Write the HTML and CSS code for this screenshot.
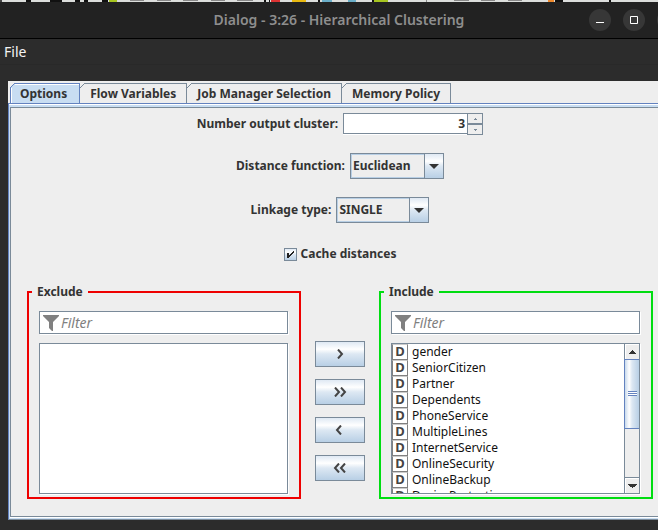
FILE: index.html
```html
<!DOCTYPE html>
<html lang="en">
<head>
<meta charset="utf-8">
<title>Dialog - 3:26 - Hierarchical Clustering</title>
<link rel="stylesheet" href="styles.css">
</head>
<body>
<div class="window">
  <svg class="backdrop" viewBox="0 0 678 2" preserveAspectRatio="none" aria-hidden="true">
    <path fill="#dcdedc" d="M2 0h676v2H2z"/>
    <path fill="#111" d="M26 0h5v2h-5zM50 0h12v2H50zM75 0h5v2h-5zM84 0h4v2h-4zM102 0h6v2h-6zM264 0h2v2h-2zM269 0h1v2h-1zM318 0h2v2h-2zM372 0h2v2h-2zM555 0h8v2h-8zM609 0h2v2h-2z"/>
    <path fill="#888" d="M130 0h14v1h-14zM157 0h14v1h-14zM183 0h15v1h-15zM211 0h14v1h-14zM237 0h16v1h-16zM426 0h1v2h-1zM454 0h15v1h-15zM481 0h14v1h-14zM508 0h14v1h-14z"/>
    <path fill="#a7c520" d="M109 0h8v2h-8zM374 0h14v2h-14z"/>
    <path fill="#d33" d="M271 0h9v2h-9z"/>
    <path fill="#e9b910" d="M292 0h14v2h-14z"/>
    <path fill="#6aaec8" d="M322 0h10v2h-10zM348 0h8v2h-8z"/>
    <path fill="#f08a2c" d="M548 0h6v2h-6z"/>
  </svg>
  <header class="titlebar">
    <h1 class="title">Dialog - 3:26 - Hierarchical Clustering</h1>
    <div class="window-buttons">
      <button class="round" type="button" aria-label="Minimize"><svg width="22" height="22" viewBox="0 0 22 22"><path d="M7 13.500h8" stroke="#fff" fill="none"/></svg></button>
      <button class="round" type="button" aria-label="Maximize"><svg width="22" height="22" viewBox="0 0 22 22"><path d="M7.500 7.500h7v7h-7z" stroke="#fff" fill="none"/></svg></button>
      <button class="round" type="button" aria-label="Close"><svg width="22" height="22" viewBox="0 0 22 22"><path d="M7 7l8 8M15 7l-8 8" stroke="#fff" fill="none"/></svg></button>
    </div>
  </header>
  <nav class="menubar"><button class="menu" type="button">File</button></nav>

  <main class="dialog">
    <div class="tabs" role="tablist">
      <button class="tab selected" type="button" role="tab" aria-selected="true">Options</button>
      <button class="tab" type="button" role="tab" aria-selected="false">Flow Variables</button>
      <button class="tab" type="button" role="tab" aria-selected="false">Job Manager Selection</button>
      <button class="tab" type="button" role="tab" aria-selected="false">Memory Policy</button>
    </div>
    <div class="pane">
      <form class="options">
        <div class="row row-spinner">
          <label for="clusters">Number output cluster:</label>
          <div class="spinner">
            <input id="clusters" type="text" inputmode="numeric" value="3">
            <div class="steps">
              <button type="button" aria-label="Increase"><svg width="3" height="2" viewBox="0 0 3 2"><path d="M1 0h1v1h1v1H0V1h1z"/></svg></button>
              <button type="button" aria-label="Decrease"><svg width="3" height="2" viewBox="0 0 3 2"><path d="M0 0h3v1H2v1H1V1H0z"/></svg></button>
            </div>
          </div>
        </div>
        <div class="row">
          <label for="distance">Distance function:</label>
          <div class="combo">
            <select id="distance"><option>Euclidean</option></select>
            <span class="combo-arrow"><svg width="10" height="5" viewBox="0 0 10 5"><path d="M0 0h10L5 5z"/></svg></span>
          </div>
        </div>
        <div class="row">
          <label for="linkage">Linkage type:</label>
          <div class="combo">
            <select id="linkage"><option>SINGLE</option></select>
            <span class="combo-arrow"><svg width="10" height="5" viewBox="0 0 10 5"><path d="M0 0h10L5 5z"/></svg></span>
          </div>
        </div>
        <div class="row row-check">
          <label class="check">
            <span class="check-box">
              <input type="checkbox" checked>
              <svg width="13" height="13" viewBox="0 0 13 13" aria-hidden="true"><path d="M3 5h2v2h1V6h1V5h1V4h1V3h1v2H9v1H8v1H7v1H6v1H5v1H3z"/></svg>
            </span>
            Cache distances
          </label>
        </div>

        <div class="columns">
          <fieldset class="group exclude">
            <legend>Exclude</legend>
            <div class="filter">
              <svg width="16" height="16" viewBox="0 0 16 16" aria-hidden="true"><path d="M0 0h16v1l-6 6v9H9l-3-3V7L0 1z"/></svg>
              <input type="text" placeholder="Filter" aria-label="Filter excluded columns">
            </div>
            <div class="list"><ul aria-label="Excluded columns"></ul></div>
          </fieldset>
          <div class="movers">
            <button type="button" aria-label="Include selected"><svg width="14" height="10" viewBox="0 0 14 10"><path d="M5 .5L9 5 5 9.500"/></svg></button>
            <button type="button" aria-label="Include all"><svg width="14" height="10" viewBox="0 0 14 10"><path d="M2 .5L6 5 2 9.500M8 .5L12 5 8 9.500"/></svg></button>
            <button type="button" aria-label="Exclude selected"><svg width="14" height="10" viewBox="0 0 14 10"><path d="M8 .5L4 5l4 4.500"/></svg></button>
            <button type="button" aria-label="Exclude all"><svg width="14" height="10" viewBox="0 0 14 10"><path d="M6 .5L2 5l4 4.500M12 .5L8 5l4 4.500"/></svg></button>
          </div>
          <fieldset class="group include">
            <legend>Include</legend>
            <div class="filter">
              <svg width="16" height="16" viewBox="0 0 16 16" aria-hidden="true"><path d="M0 0h16v1l-6 6v9H9l-3-3V7L0 1z"/></svg>
              <input type="text" placeholder="Filter" aria-label="Filter included columns">
            </div>
            <div class="list">
              <ul aria-label="Included columns">
                <li><span class="type">D</span>gender</li>
                <li><span class="type">D</span>SeniorCitizen</li>
                <li><span class="type">D</span>Partner</li>
                <li><span class="type">D</span>Dependents</li>
                <li><span class="type">D</span>PhoneService</li>
                <li><span class="type">D</span>MultipleLines</li>
                <li><span class="type">D</span>InternetService</li>
                <li><span class="type">D</span>OnlineSecurity</li>
                <li><span class="type">D</span>OnlineBackup</li>
                <li><span class="type">D</span>DeviceProtection</li>
              </ul>
              <div class="scrollbar">
                <button class="scroll-step" type="button" aria-label="Scroll up"><svg width="7" height="4" viewBox="0 0 7 4"><path d="M3 0h1v1h1v1h1v1h1v1H0V3h1V2h1V1h1z"/></svg></button>
                <div class="track"><div class="thumb"><span class="grip"></span></div></div>
                <button class="scroll-step down" type="button" aria-label="Scroll down"><svg width="9" height="4" viewBox="0 0 9 4"><path d="M0 0h9v1H8v1H7v1H5v1H4V3H2V2H1V1H0z"/></svg></button>
              </div>
            </div>
          </fieldset>
        </div>
      </form>
    </div>
  </main>
</div>
</body>
</html>
```

FILE: styles.css
```css
:root {
  --dark: #2c2c2c;
  --panel: #eeeeee;
  --line: #7a8a99;
  --blue: #6382bf;
  --pale: #c8ddf2;
  --text: #333333;
  --metal: linear-gradient(#dfe9f4, #ffffff 30%, #dde8f3 50%, #b8cfe5);
}

* { box-sizing: border-box; }

body {
  margin: 0;
  overflow: hidden;
  min-height: 100vh;
  background: var(--dark);
  color: var(--text);
  font: bold 12px/16px "Noto Sans", sans-serif;
}

button, input, select { font: inherit; color: inherit; margin: 0; border-radius: 0; }
button { padding: 0; border: 0; background: none; }
svg { display: block; }

/* The dialog runs slightly past the right edge of the viewport. */
.window { width: calc(100% + 20px); }

.backdrop { width: 100%; height: 2px; background: #444; }

.titlebar {
  display: grid;
  grid-template-columns: 1fr auto 1fr;
  align-items: center;
  height: 37px;
  background: #222222;
  border-bottom: 1px solid #000;
}
.title {
  grid-column: 2;
  margin: 0;
  font-size: 14px;
  font-weight: 600;
  line-height: 20px;
  color: #8e8e8e;
}
.window-buttons { display: flex; justify-content: flex-end; gap: 12px; margin-right: -1px; }
.round { width: 22px; height: 22px; border-radius: 50%; background: #373737; }

.menubar { height: 26px; padding: 3px 4px; border-bottom: 1px solid #292929; }
.menu { font-size: 14px; font-weight: 400; line-height: 20px; color: #f4f4f4; display: block; }

.dialog { margin: 16px 6px 0 8px; background: var(--panel); }

.tabs { display: flex; padding: 2px 0 0 2px; }
.tab {
  position: relative;
  height: 20px;
  padding: 0 10px;
  line-height: 20px;
  border-top: 1px solid var(--line);
  border-right: 1px solid var(--line);
}
.tab::before {
  content: "";
  position: absolute;
  left: 0;
  top: -1px;
  width: 5px;
  height: 5px;
  background: linear-gradient(135deg, var(--panel) 42%, var(--line) 42% 58%, transparent 58%);
}
.tab.selected {
  padding: 0 12px 0 9px;
  border-color: var(--blue);
  border-left: 1px solid var(--blue);
  background: var(--pale);
  box-shadow: inset 1px 1px #fff;
}
.tab.selected::before {
  left: -1px;
  background: linear-gradient(135deg, var(--panel) 42%, var(--blue) 42% 58%, var(--pale) 58%);
}

.pane {
  padding: 1px 1px 2px;
  border: 1px solid var(--line);
  border-top-color: var(--blue);
  border-left-color: var(--blue);
  background: linear-gradient(#fff, #fff) top / 100% 1px no-repeat var(--pale);
}
.options {
  margin-top: 2px;
  padding: 5px 16px 17px;
  border: 1px solid var(--line);
  box-shadow: 0 1px #fff;
  background: var(--panel);
}

.row { display: flex; justify-content: center; align-items: center; gap: 5px; height: 26px; margin-bottom: 18px; }
.row-spinner { height: 22px; }
.row-check { margin-bottom: 17px; }

.spinner { display: flex; width: 140px; height: 22px; }
.spinner input {
  flex: 1;
  min-width: 0;
  height: 21px;
  padding: 0 2px;
  border: 1px solid var(--line);
  border-right: 0;
  background: #fff;
  text-align: right;
  box-shadow: 0 1px #fff;
}
.steps { display: flex; flex-direction: column; width: 16px; }
.steps button {
  flex: 1;
  display: flex;
  align-items: center;
  justify-content: center;
  border: 1px solid var(--line);
  fill: var(--line);
}

.combo { position: relative; }
.combo select {
  display: block;
  appearance: none;
  height: 26px;
  min-width: 93px;
  padding: 0 32px 0 2px;
  border: 1px solid var(--line);
  background: var(--panel);
  box-shadow: inset 0 0 0 1px #b8cfe5;
  outline: 0;
}
.combo-arrow {
  position: absolute;
  top: 0;
  right: 0;
  display: flex;
  align-items: center;
  justify-content: center;
  width: 20px;
  height: 26px;
  border: 1px solid var(--line);
  background: var(--metal);
  fill: var(--text);
  pointer-events: none;
}

.check { display: flex; align-items: center; gap: 4px; }
.check-box { display: grid; }
.check-box > * { grid-area: 1 / 1; }
.check-box input {
  appearance: none;
  width: 13px;
  height: 13px;
  border: 1px solid var(--line);
  background: var(--metal);
}
.check-box svg { position: relative; visibility: hidden; fill: #222; pointer-events: none; }
.check-box input:checked + svg { visibility: visible; }

.columns { display: grid; grid-template-columns: 1fr 78px 1fr; }
.group { min-width: 0; margin: 0; padding: 11px 11px 3px 10px; border: 2px solid; }
.group legend { margin-left: -7px; padding: 0 5px; color: var(--text); }
.exclude { border-color: #ee0000; }
.include { border-color: #00dd11; }

.filter {
  display: flex;
  align-items: center;
  gap: 2px;
  height: 23px;
  padding-left: 3px;
  border: 1px solid var(--line);
  background: #fff;
  box-shadow: 1px 1px #fff;
  fill: #808080;
}
.filter input {
  flex: 1;
  min-width: 0;
  padding: 0;
  border: 0;
  outline: 0;
  background: none;
  font-size: 14px;
  font-weight: 400;
  line-height: 20px;
}
.filter input::placeholder { color: #808080; font-style: italic; opacity: 1; }

.list {
  display: flex;
  height: 151px;
  margin-top: 9px;
  border: 1px solid var(--line);
  background: #fff;
  box-shadow: 1px 1px #fff;
  overflow: hidden;
}
.list ul { flex: 1; margin: 0; padding: 0; list-style: none; font-weight: 400; color: #111; }
.list li { display: flex; gap: 4px; height: 16px; }
.type {
  width: 16px;
  height: 16px;
  border: 1px solid #808080;
  border-top-color: #ccc;
  font-size: 13px;
  font-weight: 700;
  line-height: 13px;
  text-align: center;
  color: #444;
}

.scrollbar { display: flex; flex-direction: column; width: 15px; border-left: 1px solid var(--line); background: var(--panel); }
.scroll-step { display: flex; align-items: center; justify-content: center; height: 15px; box-shadow: inset 1px 1px #fff; fill: var(--text); }
.scroll-step.down { height: 16px; border-top: 1px solid var(--line); }
.track { flex: 1; }
.thumb {
  display: flex;
  align-items: center;
  justify-content: center;
  height: 59%;
  margin-left: -1px;
  border: 1px solid var(--blue);
  border-right: 0;
  background: linear-gradient(90deg, #c9daec, #fff 30%, #dde8f3 50%, #b8cfe5);
}
.grip { width: 9px; height: 5px; background: repeating-linear-gradient(var(--blue) 0 1px, #fff 1px 2px); }

.movers { display: flex; flex-direction: column; gap: 12px; padding: 57px 14px 0; }
.movers button {
  display: flex;
  align-items: center;
  justify-content: center;
  height: 26px;
  border: 1px solid var(--line);
  background: var(--metal);
}
.movers path { fill: none; stroke: #444; stroke-width: 2; }
```
